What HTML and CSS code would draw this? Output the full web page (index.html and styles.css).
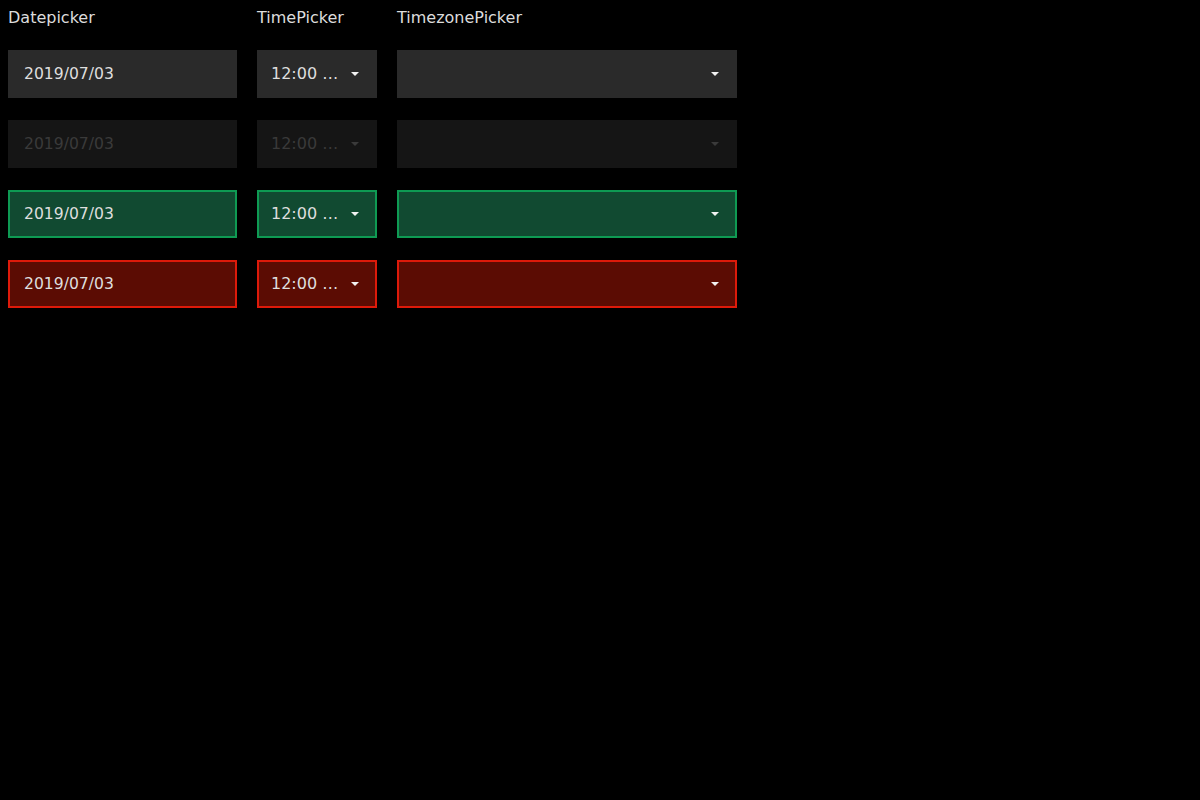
FILE: index.html
```html
<!DOCTYPE html>
<html>
<head>
<meta charset="utf-8">
<link rel="stylesheet" href="styles.css">
</head>
<body>
<div class="grid">
  <div class="label">Datepicker</div>
  <div class="label">TimePicker</div>
  <div class="label">TimezonePicker</div>

  <div class="field date">2019/07/03</div>
  <div class="field time"><span class="val">12:00 …</span><span class="caret"></span></div>
  <div class="field zone"><span class="val"></span><span class="caret"></span></div>

  <div class="field date disabled">2019/07/03</div>
  <div class="field time disabled"><span class="val">12:00 …</span><span class="caret"></span></div>
  <div class="field zone disabled"><span class="val"></span><span class="caret"></span></div>

  <div class="field date success">2019/07/03</div>
  <div class="field time success"><span class="val">12:00 …</span><span class="caret"></span></div>
  <div class="field zone success"><span class="val"></span><span class="caret"></span></div>

  <div class="field date error">2019/07/03</div>
  <div class="field time error"><span class="val">12:00 …</span><span class="caret"></span></div>
  <div class="field zone error"><span class="val"></span><span class="caret"></span></div>
</div>
</body>
</html>
```
FILE: styles.css
```css
html, body {
  margin: 0;
  background: #000;
}
body {
  padding: 8px;
  font-family: "DejaVu Sans", sans-serif;
  font-size: 16px;
  color: #dcdcdc;
}
.grid {
  display: grid;
  grid-template-columns: 229px 120px 340px;
  column-gap: 20px;
  row-gap: 22px;
}
.label {
  height: 20px;
  line-height: 20px;
}
.field {
  box-sizing: border-box;
  height: 48px;
  background: #2a2a2a;
  display: flex;
  align-items: center;
  color: #dedede;
  line-height: 20px;
}
.date { padding-left: 16px; font-size: 15.6px; }
.time { padding-left: 14px; padding-right: 18px; }
.zone { padding-left: 16px; padding-right: 18px; }
.val { flex: 1; white-space: nowrap; }
.caret {
  width: 0;
  height: 0;
  border-left: 4px solid transparent;
  border-right: 4px solid transparent;
  border-top: 4px solid #f2f2f2;
}
.disabled {
  background: #151515;
  color: #3a3a3a;
}
.disabled .caret { border-top-color: #3a3a3a; }
.success {
  background: #114a31;
  border: 2px solid #0e9a53;
}
.error {
  background: #5b0c03;
  border: 2px solid #dd1a0a;
}
.success.date, .error.date { padding-left: 14px; }
.success.time, .error.time { padding-left: 12px; padding-right: 16px; }
.success.zone, .error.zone { padding-right: 16px; }
```
